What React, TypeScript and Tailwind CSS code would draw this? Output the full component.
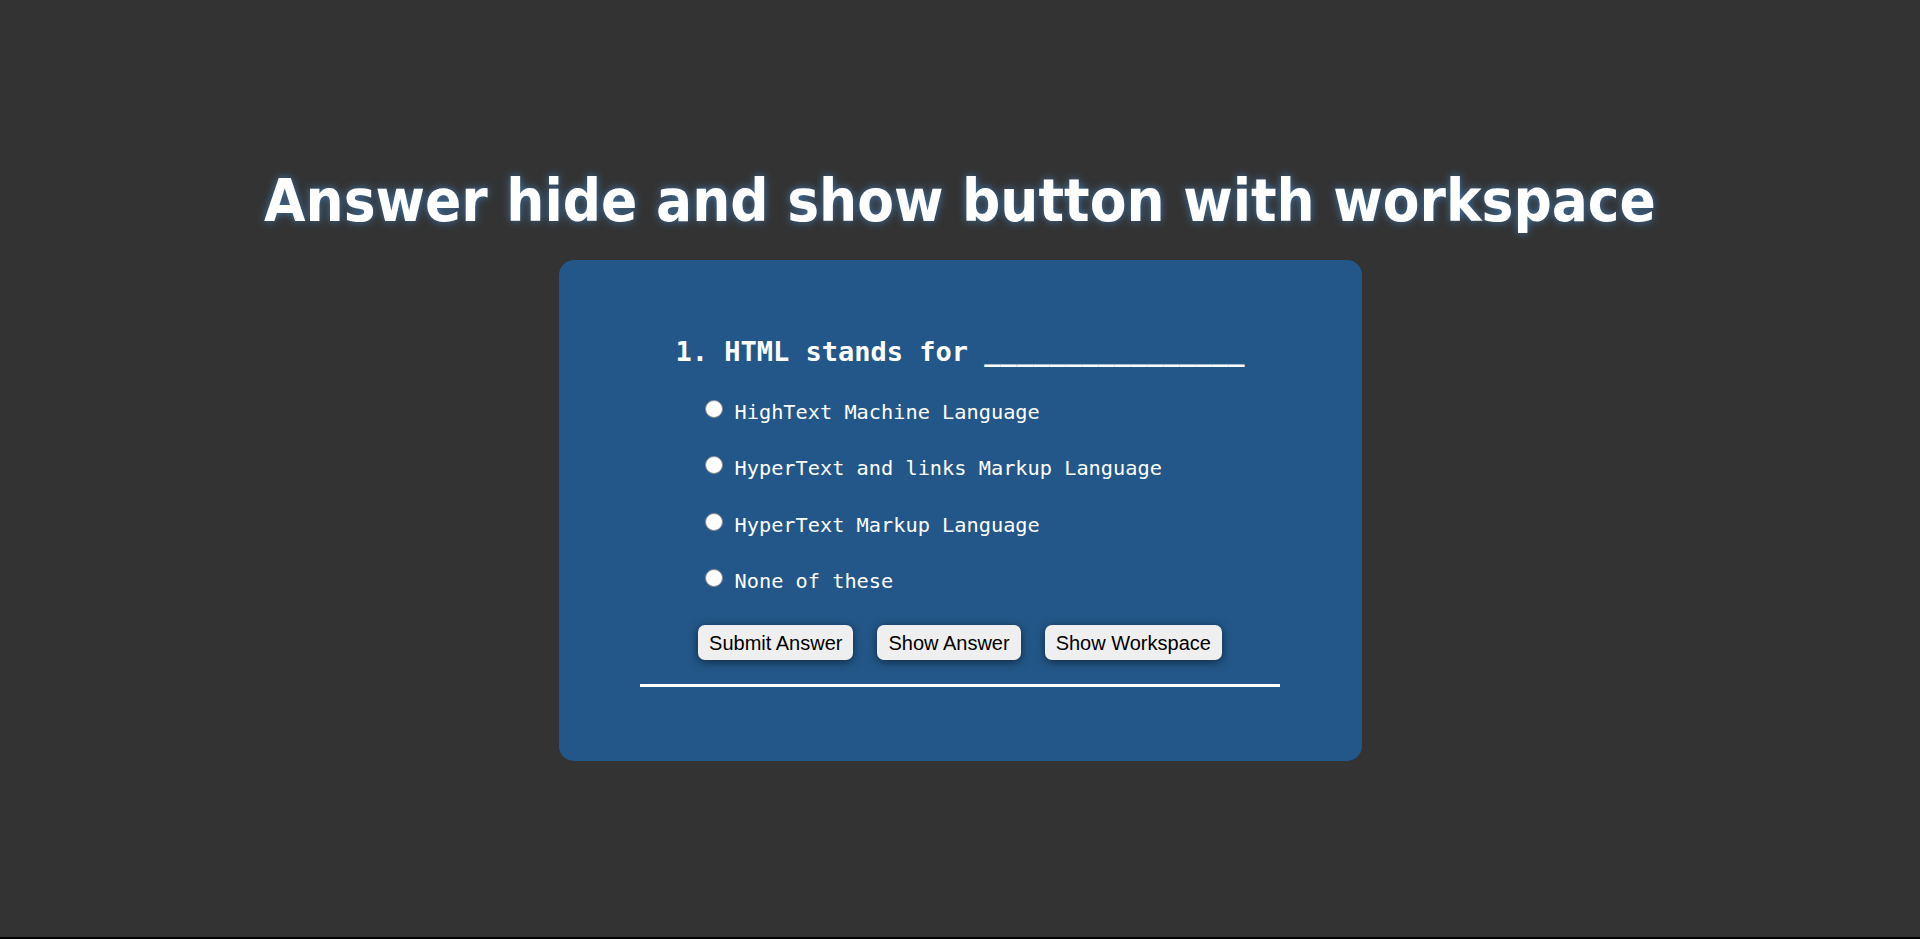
const options = [
  "HighText Machine Language",
  "HyperText and links Markup Language",
  "HyperText Markup Language",
  "None of these",
];

const buttons = ["Submit Answer", "Show Answer", "Show Workspace"];

export default function App() {
  return (
    <div className="h-[939px] border-b-2 border-black bg-[#333333] flex flex-col items-center">
      <h1 className="mt-[166px] h-[70px] leading-[70px] text-[59.5px] font-bold text-white font-['DejaVu_Sans_Condensed','DejaVu_Sans',sans-serif] [font-stretch:condensed] [text-shadow:0_0_9px_rgba(70,140,210,0.75)]">
        Answer hide and show button with workspace
      </h1>

      <div className="mt-[24px] w-[803px] h-[501px] rounded-[15px] bg-[#235789] pt-[76px] flex flex-col">
        <h2 className="text-center text-white text-[27px] leading-[32px] font-bold font-['DejaVu_Sans_Mono',monospace]">
          1. HTML stands for ________________
        </h2>

        <div className="mt-[16px] pl-[146px] flex flex-col">
          {options.map((opt) => (
            <label
              key={opt}
              className="flex items-center h-[56.33px] text-white text-[20.3px] font-['DejaVu_Sans_Mono',monospace]"
            >
              <span className="w-[18px] h-[18px] mb-[6px] mr-3 rounded-full bg-white border border-[#8a8a8a] shrink-0" />
              <span className="leading-[56.33px]">{opt}</span>
            </label>
          ))}
        </div>

        <div className="mt-[16px] flex justify-center gap-[24px]">
          {buttons.map((b) => (
            <button
              key={b}
              className="h-[35px] px-[11px] rounded-[7px] bg-[#efefef] text-black text-[20px] font-['Liberation_Sans',Arial,sans-serif] shadow-[0_2px_10px_rgba(0,0,0,0.55)]"
            >
              {b}
            </button>
          ))}
        </div>

        <div className="mt-[24px] mx-auto w-[640px] h-[3px] bg-white" />
      </div>
    </div>
  );
}
